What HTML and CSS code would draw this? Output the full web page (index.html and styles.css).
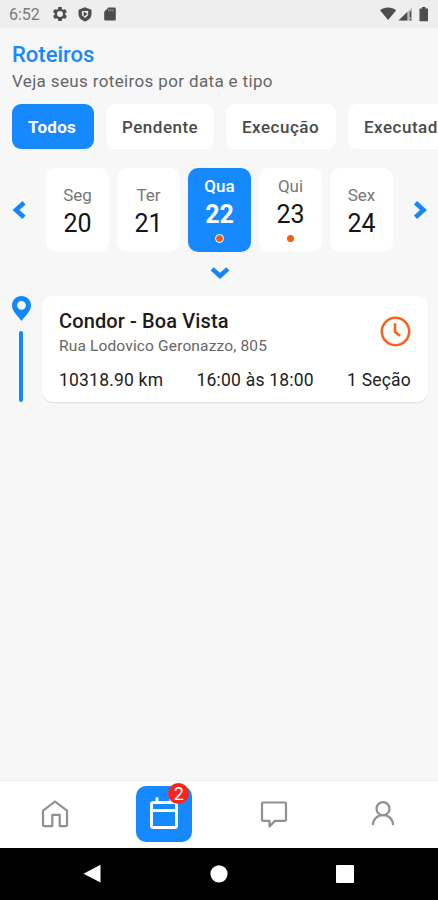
FILE: index.html
```html
<!DOCTYPE html>
<html lang="pt-BR">
<head>
<meta charset="utf-8">
<meta name="viewport" content="width=device-width, initial-scale=1">
<title>Roteiros</title>
<link rel="stylesheet" href="styles.css">
</head>
<body>
<div class="statusbar">
  <span class="time">6:52</span>
  <svg class="st-gear" width="14" height="14" viewBox="2 2 20 20"><path fill="#4d4d4d" fill-rule="evenodd" d="M19.4 13c.1-.6.1-1.400 0-2l2.100-1.600c.2-.2.2-.4.1-.6l-2-3.500c-.1-.2-.4-.3-.6-.2l-2.500 1a7 7 0 0 0-1.700-1l-.4-2.600c0-.3-.2-.5-.5-.5h-4c-.2 0-.4.200-.5.4l-.4 2.700a7 7 0 0 0-1.700 1l-2.500-1c-.2-.1-.5 0-.6.200l-2 3.500c-.1.200-.1.400.1.600L4.500 11a8 8 0 0 0 0 2l-2.100 1.600c-.2.200-.2.400-.1.600l2 3.500c.1.200.4.300.6.200l2.500-1a7 7 0 0 0 1.700 1l.4 2.700c.1.200.3.400.5.400h4c.3 0 .5-.2.500-.4l.4-2.700a7 7 0 0 0 1.700-1l2.500 1c.2.100.5 0 .6-.2l2-3.500c.1-.2.100-.4-.1-.6zM12 16.200a4.200 4.200 0 1 1 0-8.400 4.200 4.200 0 0 1 0 8.400z"/></svg>
  <svg class="st-shield" width="14" height="15" viewBox="0 0 14 15"><path fill="#4d4d4d" d="M7 .3 13.500 2.700v4.300c0 3.600-2.800 6.400-6.500 7.500C3.300 13.400.5 10.600.5 7V2.700z"/><path fill="#eee" d="M3.900 4h6.200v4.300L7 11 3.900 8.300z"/><path fill="#4d4d4d" d="m5.600 4.500 4 2.600-4 2.600z"/></svg>
  <svg class="st-sd" width="12" height="14" viewBox="0 0 12 14"><path fill="#4d4d4d" d="M4.500.5h6a1.300 1.300 0 0 1 1.300 1.300v10.400a1.300 1.300 0 0 1-1.300 1.300h-9a1.300 1.300 0 0 1-1.300-1.300V4.800z"/><path stroke="#aaa" stroke-width=".8" d="M4.700 2v2.500M6.800 2v2.500M8.900 2v2.500"/></svg>
  <svg class="st-right" width="50" height="16" viewBox="0 0 50 16"><path fill="#4d4d4d" d="M0 4.200C4.700.600 11.500.600 16.200 4.200L8.100 14z"/><path fill="#bbb" d="M32 1.500v13H18.500z"/><path fill="#4d4d4d" d="M27.300 6v8.500h-8.800zM29.700 5.500h1.500v6h-1.500zM29.700 12.700h1.500v1.800h-1.500z"/><path fill="#4d4d4d" d="M42 1h3.500v1.500H48v12.800h-8.500V2.500H42z"/></svg>
</div>
<main class="content">
  <h1 class="title">Roteiros</h1>
  <p class="subtitle">Veja seus roteiros por data e tipo</p>
  <div class="chips">
    <span class="chip active">Todos</span>
    <span class="chip chip-pending">Pendente</span>
    <span class="chip chip-running">Execução</span>
    <span class="chip chip-done">Executado</span>
  </div>
  <div class="week">
    <svg class="arrow" width="14" height="20" viewBox="0 0 14 20"><path d="M12 2.800 4 10l8 7.200"/></svg>
    <div class="days">
      <div class="day"><span class="dow">Seg</span><span class="num">20</span></div>
      <div class="day"><span class="dow">Ter</span><span class="num">21</span></div>
      <div class="day marked selected"><span class="dow">Qua</span><span class="num">22</span><i class="dot"></i></div>
      <div class="day marked"><span class="dow">Qui</span><span class="num">23</span><i class="dot"></i></div>
      <div class="day"><span class="dow">Sex</span><span class="num">24</span></div>
    </div>
    <svg class="arrow" width="14" height="20" viewBox="0 0 14 20"><path d="m2.500 2.800 8 7.200-8 7.200"/></svg>
  </div>
  <svg class="arrow expand" width="20" height="14" viewBox="0 0 20 14"><path d="M2.200 2.900 10 10l7.800-7.100"/></svg>
  <div class="route">
    <div class="track">
      <svg width="19" height="25" viewBox="0 0 19 25"><path fill="#1088ff" fill-rule="evenodd" d="M9.500 0C4.200 0 0 4.200 0 9.300 0 16 7 21 9.500 25 12 21 19 16 19 9.300 19 4.200 14.800 0 9.500 0zm0 4.900a4.400 4.400 0 1 1 0 8.800 4.400 4.400 0 0 1 0-8.800z"/></svg>
      <span class="line"></span>
    </div>
    <article class="card">
      <div class="card-head">
        <div>
          <h2 class="place">Condor - Boa Vista</h2>
          <p class="address">Rua Lodovico Geronazzo, 805</p>
        </div>
        <svg class="clock" width="31" height="31" viewBox="0 0 31 31"><circle cx="15.500" cy="15.500" r="13.700"/><path d="M15 7.300v8.500l5 4"/></svg>
      </div>
      <div class="facts"><span>10318.90 km</span><span>16:00 às 18:00</span><span>1 Seção</span></div>
    </article>
  </div>
</main>
<nav class="tabs">
  <div class="tab"><svg width="28" height="28" viewBox="0 0 28 28"><path d="M2 10.700 14 1.500l12 9.200v14.200a1.200 1.200 0 0 1-1.200 1.200h-6.100V14.900h-7.400v11.200H3.200A1.200 1.200 0 0 1 2 24.900z"/></svg></div>
  <div class="tab"><div class="tab-active">
    <svg width="30" height="34" viewBox="0 0 30 34"><rect x="2.500" y="5.500" width="25" height="25" rx="2"/><path d="M2.500 13.500h25M8 1.500v4M22 1.500v4"/></svg>
    <span class="badge">2</span>
  </div></div>
  <div class="tab"><svg width="28" height="28" viewBox="0 0 28 28"><path d="M3.200 2.500h21.600A1.200 1.200 0 0 1 26 3.700v16a1.200 1.200 0 0 1-1.200 1.200H15l-5.500 5.500v-5.500H3.200A1.200 1.200 0 0 1 2 19.700v-16A1.200 1.200 0 0 1 3.200 2.500z"/></svg></div>
  <div class="tab"><svg width="28" height="28" viewBox="0 0 28 28"><circle cx="14" cy="8.700" r="6.500"/><path d="M4 25c0-6 4.400-9.800 10-9.800S24 19 24 25"/></svg></div>
</nav>
<div class="sysnav">
  <svg width="18" height="20" viewBox="0 0 18 20"><path d="M17.500.8v17.700L.5 9.700z"/></svg>
  <svg width="18" height="20" viewBox="0 0 18 20"><circle cx="9" cy="9.800" r="8.600"/></svg>
  <svg width="18" height="20" viewBox="0 0 18 20"><rect y="1" width="18" height="18" rx="1"/></svg>
</div>
</body>
</html>
```
FILE: styles.css
```css
* { box-sizing: border-box; margin: 0; padding: 0; }
body {
  width: 438px;
  height: 900px;
  display: flex;
  flex-direction: column;
  overflow: hidden;
  background: #f7f7f7;
  font-family: Roboto, "Liberation Sans", sans-serif;
  color: #1c1c1c;
  white-space: nowrap;
}
svg { display: block; flex: none; }

.statusbar { height: 28px; flex: none; display: flex; align-items: center; padding: 0 8px 0 9px; background: #eee; }
.time { width: 44px; font-size: 16px; color: #7a7a7a; }
.st-shield { margin-left: 11px; }
.st-sd { margin-left: 12px; }
.st-right { margin-left: auto; }

.content { flex: 1; min-height: 0; padding: 0 10px 0 12px; }
.title { margin-top: 14px; font-size: 22px; line-height: 26px; font-weight: 500; color: #1a88fa; }
.subtitle { margin-top: 2px; font-size: 17px; line-height: 22px; letter-spacing: 0.36px; color: #666; }

.chips { display: flex; gap: 12px; margin: 12px -10px 0 0; overflow: hidden; }
.chip { width: 82px; height: 45px; flex: none; padding-left: 16px; border-radius: 9px; background: #fff; color: #4a4a4a; font-size: 17px; line-height: 47px; letter-spacing: 0.5px; font-weight: 500; }
.chip-pending { width: 108px; }
.chip-running { width: 110px; }
.chip-done { width: 116px; }
.chip.active { background: #1789ff; color: #fff; font-weight: 700; letter-spacing: 0.3px; }

.week { display: flex; align-items: center; justify-content: space-between; margin: 19px 1px 0 0; }
.arrow path { fill: none; stroke: #1585fb; stroke-width: 4.6; }
.days { display: flex; gap: 8.500px; }
.day { width: 62.500px; height: 84px; display: flex; flex-direction: column; align-items: center; justify-content: center; padding-top: 3px; border-radius: 10px; background: #fff; }
.dow { font-size: 17px; line-height: 20px; color: #777; }
.num { margin-top: 4px; font-size: 25px; line-height: 30px; color: #151515; }
.marked { padding-top: 0; padding-bottom: 3px; }
.dot { width: 7px; height: 7px; margin-top: 5px; border-radius: 50%; background: #fa5c0c; }
.selected { background: #1789ff; }
.selected .dow { color: #fff; font-weight: 500; }
.selected .num { color: #fff; font-weight: 700; }
.selected .dot { outline: 1.500px solid #fff; }
.expand { margin: 14px auto 0 198px; }

.route { display: flex; margin-top: 16px; }
.track { width: 30px; display: flex; flex-direction: column; }
.line { width: 4px; height: 71px; margin: 10px 0 0 7px; border-radius: 2px; background: #1088ff; }
.card { flex: 1; height: 106px; padding: 12px 17px 0; border-radius: 11px; background: #fff; box-shadow: 0 1px 1px #ddd; }
.card-head { display: flex; justify-content: space-between; }
.place { font-size: 20px; line-height: 26px; font-weight: 500; letter-spacing: 0.12px; color: #1c1c1c; }
.address { margin-top: 1px; font-size: 15.500px; line-height: 22px; letter-spacing: 0.15px; color: #666; }
.clock { margin-top: 8px; }
.clock circle, .clock path { fill: none; stroke: #f4661b; stroke-width: 2.600; }
.facts { display: flex; justify-content: space-between; margin-top: 12px; font-size: 17.500px; line-height: 22px; letter-spacing: 0.2px; color: #222; }

.tabs { height: 68px; flex: none; display: grid; grid-template-columns: repeat(4, 1fr); padding-bottom: 2px; border-top: 1px solid #eee; background: #fff; }
.tab { display: flex; align-items: center; justify-content: center; }
.tab svg * { fill: none; stroke: #909090; stroke-width: 2.200; stroke-linejoin: round; }
.tab-active { position: relative; width: 56px; height: 56px; display: grid; place-items: center; border-radius: 10px; background: #1789ff; }
.tab .tab-active svg * { stroke: #fff; stroke-width: 3; stroke-linecap: round; }
.badge { position: absolute; top: -3px; right: 3px; width: 21px; height: 21px; border-radius: 50%; background: #f6261f; color: #fff; font-size: 18px; line-height: 21px; text-align: center; }
.sysnav { height: 52px; flex: none; display: flex; justify-content: space-between; align-items: center; padding: 0 84px 0 83px; background: #000; }
.sysnav svg { fill: #fff; }
```
